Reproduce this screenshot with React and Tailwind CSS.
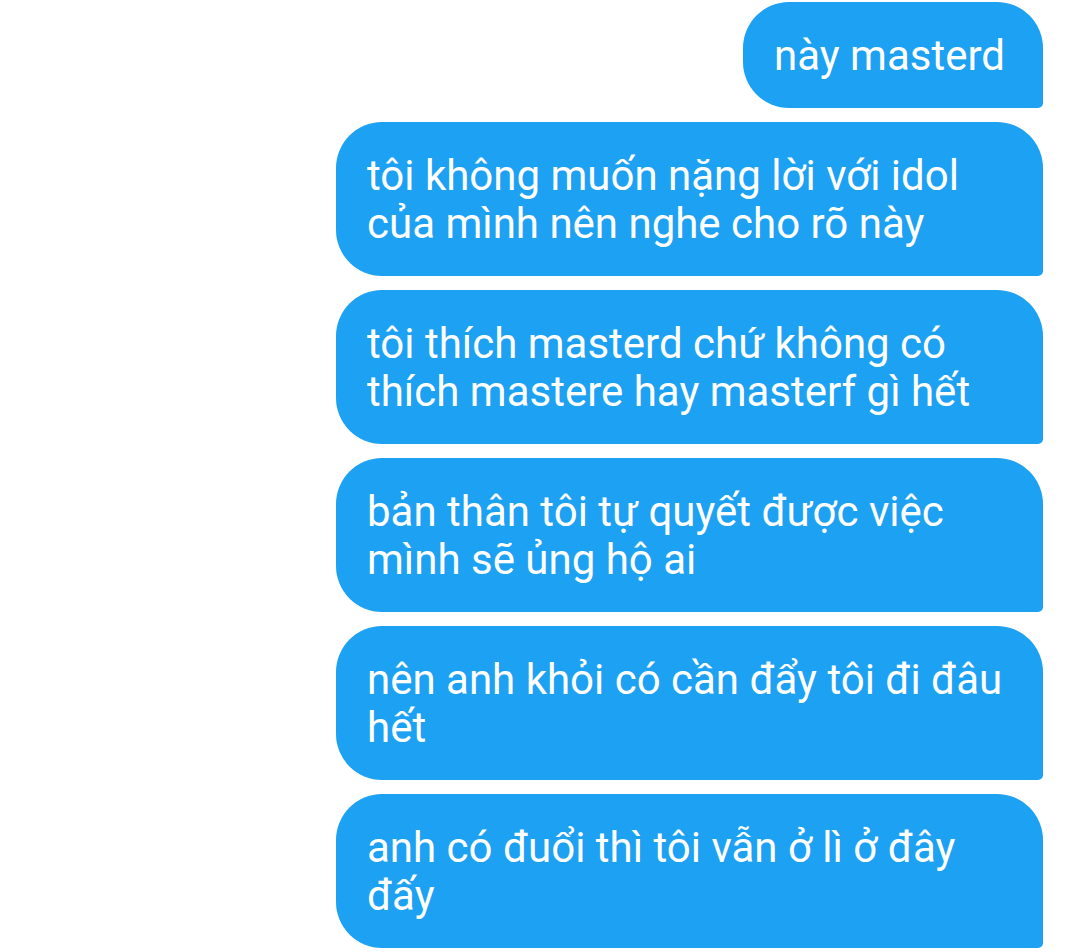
const messages = [
  "này masterd",
  "tôi không muốn nặng lời với idol của mình nên nghe cho rõ này",
  "tôi thích masterd chứ không có thích mastere hay masterf gì hết",
  "bản thân tôi tự quyết được việc mình sẽ ủng hộ ai",
  "nên anh khỏi có cần đẩy tôi đi đâu hết",
  "anh có đuổi thì tôi vẫn ở lì ở đây đấy",
];

const App = () => {
  return (
    <div className="w-[1080px] h-[952px] bg-white overflow-hidden font-['Roboto',sans-serif]">
      <div className="flex flex-col items-end gap-[14px] pt-[2px] pr-[37px]">
        {messages.map((text, i) => (
          <div
            key={i}
            className="max-w-[707px] bg-[#1da1f2] text-white text-[42px] leading-[48px] pl-[31px] pr-[38px] pt-[30px] pb-[28px] rounded-tl-[46px] rounded-tr-[46px] rounded-bl-[46px] rounded-br-[5px]"
          >
            {text}
          </div>
        ))}
      </div>
    </div>
  );
};

export default App;
